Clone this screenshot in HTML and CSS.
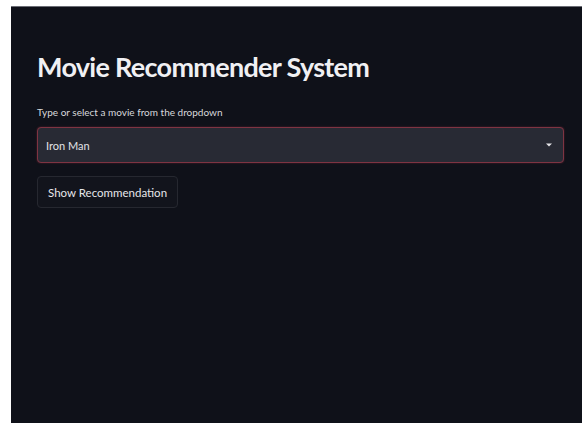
FILE: index.html
```html
<!DOCTYPE html>
<html lang="en">
<head>
<meta charset="utf-8">
<title>Movie Recommender System</title>
<link rel="stylesheet" href="styles.css">
</head>
<body>
<main class="app">
  <h1 class="title">Movie Recommender System</h1>
  <label class="field-label">Type or select a movie from the dropdown</label>
  <div class="select">
    <span class="select-value">Iron Man</span>
    <svg class="caret" width="8" height="6" viewBox="0 0 8 6"><path d="M1 1.5 L4 4.5 L7 1.5 Z" fill="#e6e6ea"/></svg>
  </div>
  <button class="btn">Show Recommendation</button>
</main>
</body>
</html>
```
FILE: styles.css
```css
html, body {
  margin: 0;
  height: 100%;
  background: #ffffff;
}

body {
  padding: 6px 0 0 11px;
  box-sizing: border-box;
  font-family: Lato, "Noto Sans", sans-serif;
}

.app {
  height: 100%;
  box-sizing: border-box;
  background: #0f1119;
  border-top: 1px solid #6b6d75;
  padding: 42px 18px 0 26px;
  display: flex;
  flex-direction: column;
  align-items: flex-start;
  color: #f2f2f4;
}

.title {
  margin: 0;
  font-size: 27px;
  font-weight: 700;
  letter-spacing: -0.7px;
  line-height: 36px;
  color: #f0f0f3;
}

.field-label {
  margin-top: 21px;
  font-size: 10px;
  line-height: 12px;
  color: #d8d8dc;
}

.select {
  margin-top: 9px;
  align-self: stretch;
  height: 36px;
  box-sizing: border-box;
  background: #282a34;
  border: 1px solid #7e3442;
  border-radius: 4px;
  box-shadow: 0 0 2px rgba(160, 50, 70, 0.5);
  display: flex;
  align-items: center;
  justify-content: space-between;
  padding: 0 10px 0 8px;
}

.select-value {
  font-size: 11px;
  color: #e2e2e6;
}

.btn {
  margin-top: 13px;
  height: 32px;
  padding: 0 10px;
  background: #12141c;
  border: 1px solid #262830;
  border-radius: 4px;
  font-family: Lato, "Noto Sans", sans-serif;
  font-size: 11.5px;
  color: #e6e6ea;
}
```
